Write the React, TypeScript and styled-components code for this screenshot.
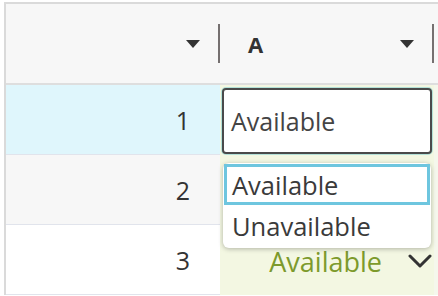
import React from 'react';
import styled, { createGlobalStyle } from 'styled-components';

const GlobalStyle = createGlobalStyle`
  html, body {
    margin: 0;
    padding: 0;
    background: #ffffff;
    font-family: 'Open Sans', 'Noto Sans', sans-serif;
    overflow: hidden;
  }
`;

const Page = styled.div`
  padding: 2px 0 0 4px;
  height: 296px;
  box-sizing: border-box;
  overflow: hidden;
`;

const Grid = styled.div`
  display: grid;
  grid-template-columns: 214px 214px minmax(0, 1fr);
  grid-template-rows: 81px 70px 70px 70px;
  border-top: 2px solid #dadada;
  border-left: 2px solid #dadada;
`;

const HeaderCell = styled.div`
  display: flex;
  align-items: center;
  background: #f7f7f7;
  border-bottom: 2px solid #dedede;
  padding-left: 28px;
`;

const HeaderLabel = styled.span`
  flex: 1;
  font-size: 22px;
  font-weight: 700;
  color: #333333;
`;

const SortArrow = styled.span`
  width: 0;
  height: 0;
  border-left: 7px solid transparent;
  border-right: 7px solid transparent;
  border-top: 8px solid #333333;
  margin-right: 18px;
`;

const Divider = styled.span`
  width: 2px;
  height: 39px;
  background: #757070;
`;

const RowHeader = styled.div<{ $tone: 'active' | 'odd' | 'even' }>`
  display: flex;
  align-items: center;
  justify-content: flex-end;
  padding-right: 30px;
  font-size: 25px;
  color: #333333;
  border-bottom: 1px solid #e1e4ec;
  background: ${({ $tone }) =>
    $tone === 'active' ? '#dff6fc' : $tone === 'odd' ? '#f7f7f7' : '#ffffff'};
`;

const DataCell = styled.div`
  position: relative;
  display: flex;
  align-items: center;
  justify-content: flex-end;
  background: #f3f7e2;
  padding: 3px 2px 1px 2px;
`;

const FillerCell = styled.div`
  background: #f5f7ec;
`;

const Editor = styled.div`
  flex: 1;
  align-self: stretch;
  display: flex;
  align-items: center;
  padding-left: 7px;
  background: #ffffff;
  border: 2px solid #4a4a4a;
  border-radius: 4px;
  box-shadow: 0 0 0 1px #b3e1d8;
  font-size: 25px;
  color: #444444;
`;

const Menu = styled.ul`
  position: absolute;
  top: 78px;
  left: 3px;
  width: 208px;
  margin: 0;
  padding: 1px 1px 2px;
  list-style: none;
  background: #ffffff;
  border-radius: 6px;
  box-shadow: 0 1px 5px rgba(0, 0, 0, 0.28);
  box-sizing: border-box;
  z-index: 2;
`;

const Option = styled.li<{ $selected?: boolean }>`
  height: 41px;
  display: flex;
  align-items: center;
  padding-left: 5px;
  font-size: 25.5px;
  color: #3a3a3a;
  border: 3px solid ${({ $selected }) => ($selected ? '#6ec6df' : 'transparent')};
  box-sizing: border-box;
`;

const Value = styled.span`
  font-size: 27px;
  color: #7d9a2c;
  margin-right: 26px;
`;

const Chevron = () => (
  <svg width="24" height="14" viewBox="0 0 24 14" fill="none">
    <path d="M2 2 L12 12 L22 2" stroke="#333333" strokeWidth="3" strokeLinecap="round" strokeLinejoin="round" />
  </svg>
);

export default function App() {
  return (
    <Page>
      <GlobalStyle />
      <Grid>
        <HeaderCell>
          <HeaderLabel />
          <SortArrow />
          <Divider />
        </HeaderCell>
        <HeaderCell>
          <HeaderLabel>A</HeaderLabel>
          <SortArrow />
          <Divider />
        </HeaderCell>
        <HeaderCell />

        <RowHeader $tone="active">1</RowHeader>
        <DataCell>
          <Editor>Available</Editor>
          <Menu>
            <Option $selected>Available</Option>
            <Option>Unavailable</Option>
          </Menu>
        </DataCell>
        <FillerCell />

        <RowHeader $tone="odd">2</RowHeader>
        <DataCell />
        <FillerCell />

        <RowHeader $tone="even">3</RowHeader>
        <DataCell>
          <Value>Available</Value>
          <Chevron />
        </DataCell>
        <FillerCell />
      </Grid>
    </Page>
  );
}
